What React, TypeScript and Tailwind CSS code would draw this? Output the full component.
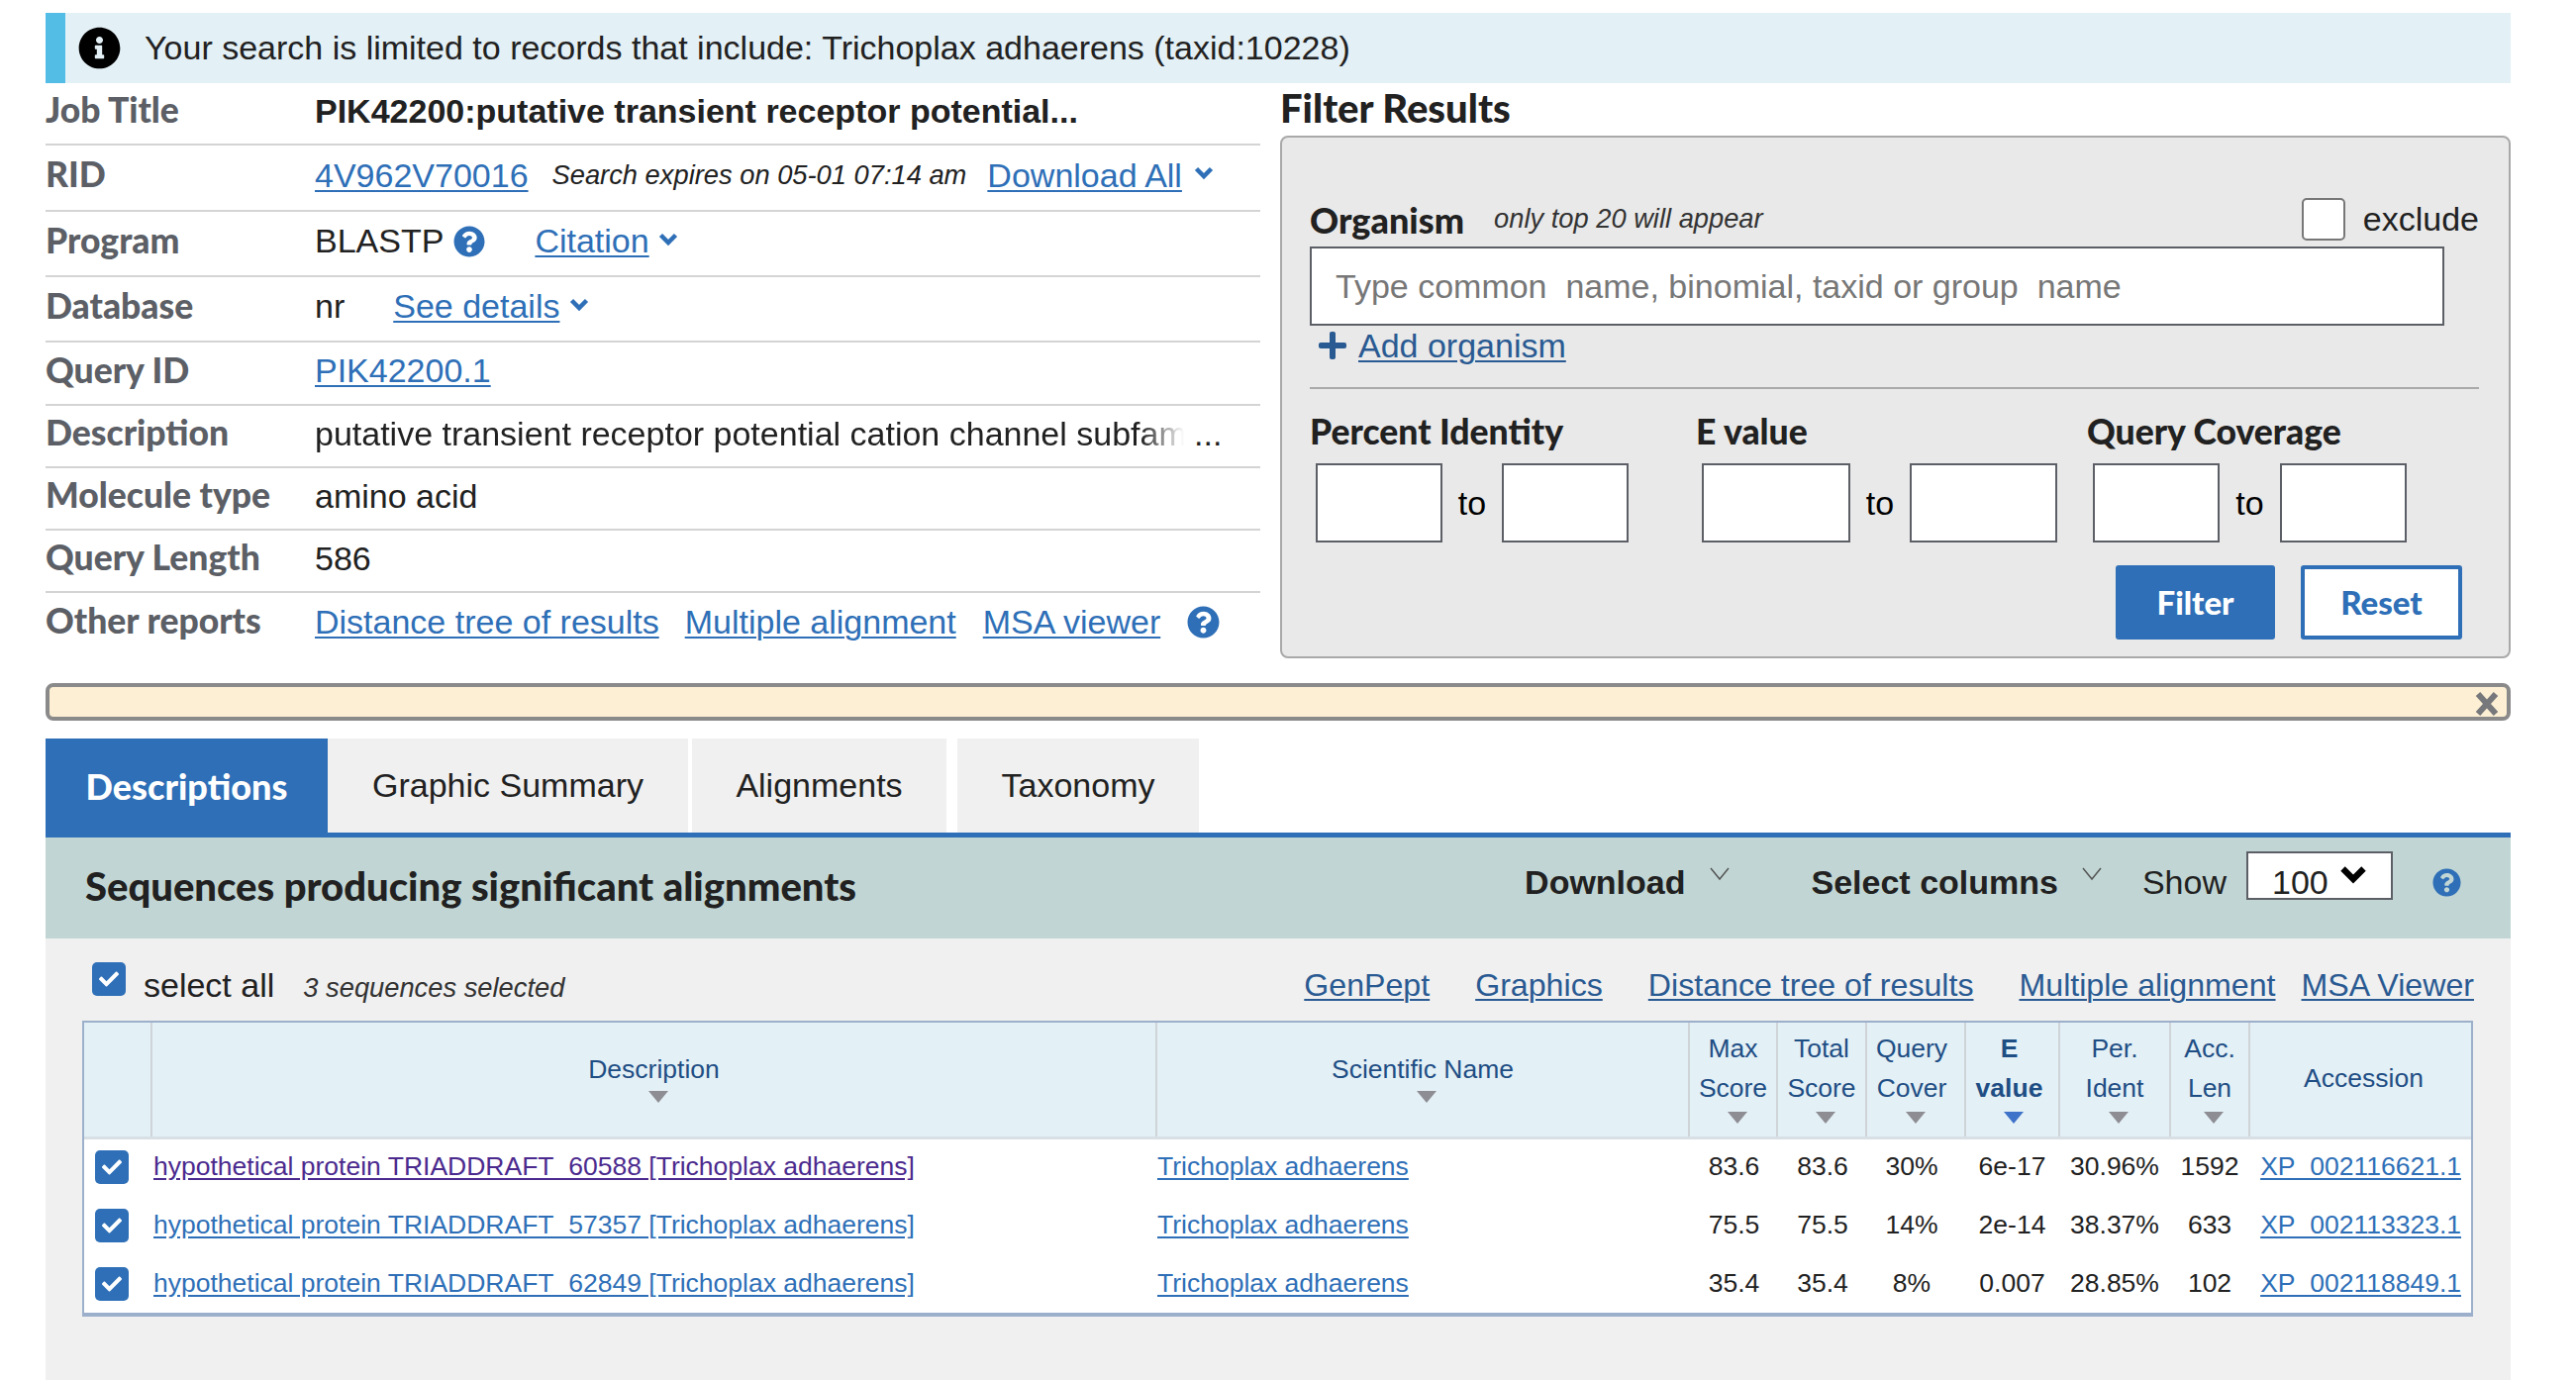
import React from "react";
import { FaInfoCircle, FaQuestionCircle, FaCheck, FaPlus } from "react-icons/fa";

const sans = "[font-family:'Liberation_Sans',Arial,sans-serif]";

const Chevron = ({ className = "", color = "#2e6fb7", w = 20 }: { className?: string; color?: string; w?: number }) => (
  <svg width={w} height={w * 0.7} viewBox="0 0 20 14" className={className}>
    <path d="M2.5 2.5L10 10L17.5 2.5" fill="none" stroke={color} strokeWidth="4.5" />
  </svg>
);

const A = ({ children, className = "" }: { children: React.ReactNode; className?: string }) => (
  <a className={`text-[#2e6fb7] underline decoration-2 underline-offset-[3px] ${className}`}>{children}</a>
);

const Row = ({ label, children, h }: { label: string; children: React.ReactNode; h: string }) => (
  <div className={`flex items-center pb-[5px] border-b-2 border-[#d4d4d4] last:border-b-0 ${h}`}>
    <div className="w-[272px] shrink-0 -translate-y-[1px] font-['Lato'] font-black text-[35.5px] text-[#5c5f66]">{label}</div>
    <div className="flex items-center text-[34px] text-[#212121] whitespace-nowrap">{children}</div>
  </div>
);

const Check = ({ className = "" }: { className?: string }) => (
  <span className={`flex items-center justify-center bg-[#2e6fb7] rounded-[5px] w-[34px] h-[34px] ${className}`}>
    <FaCheck className="text-white text-[20px]" />
  </span>
);

const Box = ({ className = "" }: { className?: string }) => (
  <div className={`h-[80px] bg-white border-2 border-[#5c5f66] ${className}`} />
);

const Tri = ({ blue = false, className = "" }: { blue?: boolean; className?: string }) => (
  <svg width="22" height="14" viewBox="0 0 22 14" className={`mx-auto block translate-x-[4px] ${className}`}>
    <path d="M1 1H21L11 13Z" fill={blue ? "#3f73c9" : "#8d8d93"} />
  </svg>
);

const Th = ({ children, blue = false, className = "" }: { children: React.ReactNode; blue?: boolean; className?: string }) => (
  <th className={`border-l-2 border-[#cfd4d8] text-[#1f4e84] text-[26.5px] leading-[40px] align-top pt-[6px] px-0 ${blue ? "font-bold pr-[6px]" : "font-normal"} ${className}`}>
    {children}
    <Tri blue={blue} className="mt-[3px]" />
  </th>
);

const rows = [
  { t: "hypothetical protein TRIADDRAFT_60588 [Trichoplax adhaerens]", v: true, n: ["83.6", "83.6", "30%", "6e-17", "30.96%", "1592"], acc: "XP_002116621.1" },
  { t: "hypothetical protein TRIADDRAFT_57357 [Trichoplax adhaerens]", v: false, n: ["75.5", "75.5", "14%", "2e-14", "38.37%", "633"], acc: "XP_002113323.1" },
  { t: "hypothetical protein TRIADDRAFT_62849 [Trichoplax adhaerens]", v: false, n: ["35.4", "35.4", "8%", "0.007", "28.85%", "102"], acc: "XP_002118849.1" },
];

export default function App() {
  return (
    <div className={`w-[2602px] h-[1394px] overflow-hidden bg-white pt-[13px] pl-[46px] pr-[66px] ${sans}`}>
      {/* BANNER */}
      <div className="flex items-center h-[71px] bg-[#e3f0f6] border-l-[20px] border-[#53bde6] text-[34px] text-[#212121]">
        <FaInfoCircle className="ml-[13px] mr-[24px] text-[43px] text-black" />
        Your search is limited to records that include: Trichoplax adhaerens (taxid:10228)
      </div>

      {/* TOP */}
      <div className="flex h-[615px]">
        <div className="w-[1227px] shrink-0">
          <Row label="Job Title" h="h-[63px]">
            <b className="text-[#212121]">PIK42200:putative transient receptor potential...</b>
          </Row>
          <Row label="RID" h="h-[67px]">
            <A>4V962V70016</A>
            <i className="ml-[24px] text-[27.3px]">Search expires on 05-01 07:14 am</i>
            <A className="ml-[21px]">Download All</A>
            <Chevron className="ml-[12px] -translate-y-[2px]" />
          </Row>
          <Row label="Program" h="h-[66px]">
            BLASTP
            <FaQuestionCircle className="ml-[10px] text-[#2e6fb7] text-[32px]" />
            <A className="ml-[50px]">Citation</A>
            <Chevron className="ml-[9px] -translate-y-[2px]" />
          </Row>
          <Row label="Database" h="h-[66px]">
            nr
            <A className="ml-[49px]">See details</A>
            <Chevron className="ml-[10px] -translate-y-[2px]" />
          </Row>
          <Row label="Query ID" h="h-[64px]">
            <A>PIK42200.1</A>
          </Row>
          <Row label="Description" h="h-[63px]">
            <span className="w-[878px] overflow-hidden [mask-image:linear-gradient(to_right,black_95%,transparent)]">
              putative transient receptor potential cation channel subfamily
            </span>
            <span className="ml-[10px]">...</span>
          </Row>
          <Row label="Molecule type" h="h-[63px]">amino acid</Row>
          <Row label="Query Length" h="h-[63px]">586</Row>
          <Row label="Other reports" h="h-[63px]">
            <A>Distance tree of results</A>
            <A className="ml-[26px]">Multiple alignment</A>
            <A className="ml-[27px]">MSA viewer</A>
            <FaQuestionCircle className="ml-[27px] text-[#2e6fb7] text-[33px]" />
          </Row>
        </div>

        {/* FILTER */}
        <div className="ml-[20px] flex-1">
          <div className="h-[53px] flex items-center pb-[4px] font-['Lato'] font-black text-[40px] text-[#212121]">Filter Results</div>
          <div className="h-[528px] bg-[#e9e9e9] border-2 border-[#a9a9a9] rounded-[8px] pl-[28px] pr-[30px] pt-[57px]">
            <div className="flex items-center h-[53px] pb-[2px] text-[#212121]">
              <b className="font-['Lato'] font-black text-[36px]">Organism</b>
              <i className="ml-[30px] text-[27.3px] text-[#333]">only top 20 will appear</i>
              <span className="ml-auto w-[44px] h-[43px] bg-white border-2 border-[#777] rounded-[5px]" />
              <span className="ml-[18px] text-[34px]">exclude</span>
            </div>
            <div className="flex items-center w-[1146px] h-[80px] bg-white border-2 border-[#5c5f66] pl-[24px] text-[34px] text-[#777] whitespace-pre">
              Type common  name, binomial, taxid or group  name
            </div>
            <div className="flex items-center h-[40px] pl-[7px]">
              <FaPlus className="text-[#2a5a92] text-[32px]" />
              <a className="ml-[10px] text-[34px] text-[#2a5a92] underline decoration-2 underline-offset-[3px]">Add organism</a>
            </div>
            <div className="h-[2px] bg-[#aaa] mt-[22px]" />
            <div className="flex mt-[22px]">
              <div className="w-[390px]">
                <div className="font-['Lato'] font-black text-[35.5px] text-[#212121] h-[41px] leading-[41px]">Percent Identity</div>
                <div className="flex items-center mt-[12px] ml-[6px] text-[34px]">
                  <Box className="w-[128px]" />
                  <span className="w-[60px] text-center">to</span>
                  <Box className="w-[128px]" />
                </div>
              </div>
              <div className="w-[395px]">
                <div className="font-['Lato'] font-black text-[35.5px] text-[#212121] h-[41px] leading-[41px]">E value</div>
                <div className="flex items-center mt-[12px] ml-[6px] text-[34px]">
                  <Box className="w-[150px]" />
                  <span className="w-[60px] text-center">to</span>
                  <Box className="w-[149px]" />
                </div>
              </div>
              <div>
                <div className="font-['Lato'] font-black text-[35.5px] text-[#212121] h-[41px] leading-[41px]">Query Coverage</div>
                <div className="flex items-center mt-[12px] ml-[6px] text-[34px]">
                  <Box className="w-[128px]" />
                  <span className="w-[61px] text-center">to</span>
                  <Box className="w-[128px]" />
                </div>
              </div>
            </div>
            <div className="flex justify-end gap-[26px] mt-[23px] pr-[17px] font-['Lato'] font-black text-[33px]">
              <button className="w-[161px] h-[75px] bg-[#2e6fb7] text-white rounded-[3px]">Filter</button>
              <button className="w-[163px] h-[75px] bg-white text-[#2e6fb7] border-[4px] border-[#2e6fb7] rounded-[3px]">Reset</button>
            </div>
          </div>
        </div>
      </div>

      {/* NOTICE */}
      <div className="relative mt-[-9px] h-[38px] bg-[#fcefd3] border-[4px] border-[#8a8a8a] rounded-[8px]">
        <svg width="24" height="24" viewBox="0 0 24 24" className="absolute right-[8px] top-[5px]">
          <path d="M3 2L21 22M21 2L3 22" stroke="#77787c" strokeWidth="6" />
        </svg>
      </div>

      {/* TABS */}
      <div className="flex items-stretch h-[95px] mt-[18px] text-[34px] text-[#212121]">
        <div className="flex items-center justify-center w-[285px] bg-[#2e6fb7] text-white font-['Lato'] font-black text-[36px]">Descriptions</div>
        <div className="flex items-center justify-center w-[364px] bg-[#f0f0f0]">Graphic Summary</div>
        <div className="flex items-center justify-center w-[257px] ml-[4px] bg-[#f0f0f0]">Alignments</div>
        <div className="flex items-center justify-center w-[244px] ml-[11px] bg-[#f0f0f0]">Taxonomy</div>
      </div>

      {/* RESULTS */}
      <div className="bg-[#f0f0f0] h-[600px] border-t-[5px] border-[#2e6fb7]">
        <div className="flex items-center h-[102px] bg-[#c1d6d4] pl-[40px] pb-[4px] text-[#212121]">
          <h2 className="font-['Lato'] font-black text-[40px]">Sequences producing significant alignments</h2>
          <div className="ml-auto flex items-center text-[34px] pr-[50px] -translate-y-[4px]">
            <b>Download</b>
            <svg width="20" height="14" viewBox="0 0 20 14" className="ml-[24px] -translate-y-[8px]"><path d="M1 1L10 12L19 1" fill="none" stroke="#555" strokeWidth="1.5" /></svg>
            <b className="ml-[83px]">Select columns</b>
            <svg width="20" height="14" viewBox="0 0 20 14" className="ml-[24px] -translate-y-[8px]"><path d="M1 1L10 12L19 1" fill="none" stroke="#555" strokeWidth="1.5" /></svg>
            <span className="ml-[41px]">Show</span>
            <div className="ml-[20px] flex w-[148px] h-[49px] -translate-y-[7px] bg-white border-2 border-[#5c5f66] pl-[24px] pt-[14px] items-center">
              100
              <Chevron color="#000" w={28} className="ml-[11px] -translate-y-[7px]" />
            </div>
            <FaQuestionCircle className="ml-[40px] text-[#2e6fb7] text-[29px]" />
          </div>
        </div>

        <div className="flex items-center h-[83px] pt-[11px] pl-[47px] pr-[37px]">
          <Check className="-translate-y-[6px]" />
          <span className="ml-[18px] text-[34px] text-[#212121]">select all</span>
          <i className="ml-[29px] translate-y-[3px] text-[27.3px] text-[#333]">3 sequences selected</i>
          <div className="ml-auto flex text-[32.15px] text-[#2a5a92]">
            <a className="underline decoration-2 underline-offset-[3px]">GenPept</a>
            <a className="ml-[46px] underline decoration-2 underline-offset-[3px]">Graphics</a>
            <a className="ml-[46px] underline decoration-2 underline-offset-[3px]">Distance tree of results</a>
            <a className="ml-[46px] underline decoration-2 underline-offset-[3px]">Multiple alignment</a>
            <a className="ml-[26px] underline decoration-2 underline-offset-[3px]">MSA Viewer</a>
          </div>
        </div>

        <div className="ml-[37px] w-[2415px] border-2 border-[#9db0cb] border-b-[4px] bg-white">
          <table className="w-full table-fixed border-collapse">
            <colgroup>
              <col className="w-[68px]" />
              <col className="w-[1015px]" />
              <col className="w-[538px]" />
              <col className="w-[89px]" />
              <col className="w-[90px]" />
              <col className="w-[100px]" />
              <col className="w-[95px]" />
              <col className="w-[112px]" />
              <col className="w-[80px]" />
              <col />
            </colgroup>
            <thead>
              <tr className="h-[116px] bg-[#e3f0f6] border-b-[3px] border-[#d8e0e6]">
                <th />
                <th className="border-l-2 border-[#cfd4d8] pb-[3px] font-normal text-[#1f4e84] text-[26.5px] leading-[34px]">
                  Description
                  <Tri className="mt-[4px]" />
                </th>
                <th className="border-l-2 border-[#cfd4d8] pb-[3px] font-normal text-[#1f4e84] text-[26.5px] leading-[34px]">
                  Scientific Name
                  <Tri className="mt-[4px]" />
                </th>
                <Th>Max<br />Score</Th>
                <Th>Total<br />Score</Th>
                <Th className="pr-[8px]">Query<br />Cover</Th>
                <Th blue>E<br />value</Th>
                <Th>Per.<br />Ident</Th>
                <Th>Acc.<br />Len</Th>
                <th className="border-l-2 border-[#cfd4d8] pl-[6px] font-normal text-[#1f4e84] text-[26.5px]">Accession</th>
              </tr>
            </thead>
            <tbody className="text-[26.5px] text-[#212121] text-center">
              {rows.map((r) => (
                <tr key={r.acc} className="h-[59px]">
                  <td className="pl-[11px]"><Check /></td>
                  <td className="text-left pl-[2px]">
                    <a className={`${r.v ? "text-[#4b2a8e]" : "text-[#2e6fb7]"} underline underline-offset-[3px]`}>{r.t}</a>
                  </td>
                  <td className="text-left pl-[1px]">
                    <a className="text-[#2e6fb7] underline underline-offset-[3px]">Trichoplax adhaerens</a>
                  </td>
                  {r.n.map((v, i) => (
                    <td key={i} className={i === 2 ? "pr-[8px]" : i === 0 || i === 1 ? "pl-[2px]" : ""}>{v}</td>
                  ))}
                  <td className="text-right pr-[10px]">
                    <a className="text-[#2e6fb7] underline underline-offset-[3px]">{r.acc}</a>
                  </td>
                </tr>
              ))}
            </tbody>
          </table>
        </div>
      </div>
    </div>
  );
}
